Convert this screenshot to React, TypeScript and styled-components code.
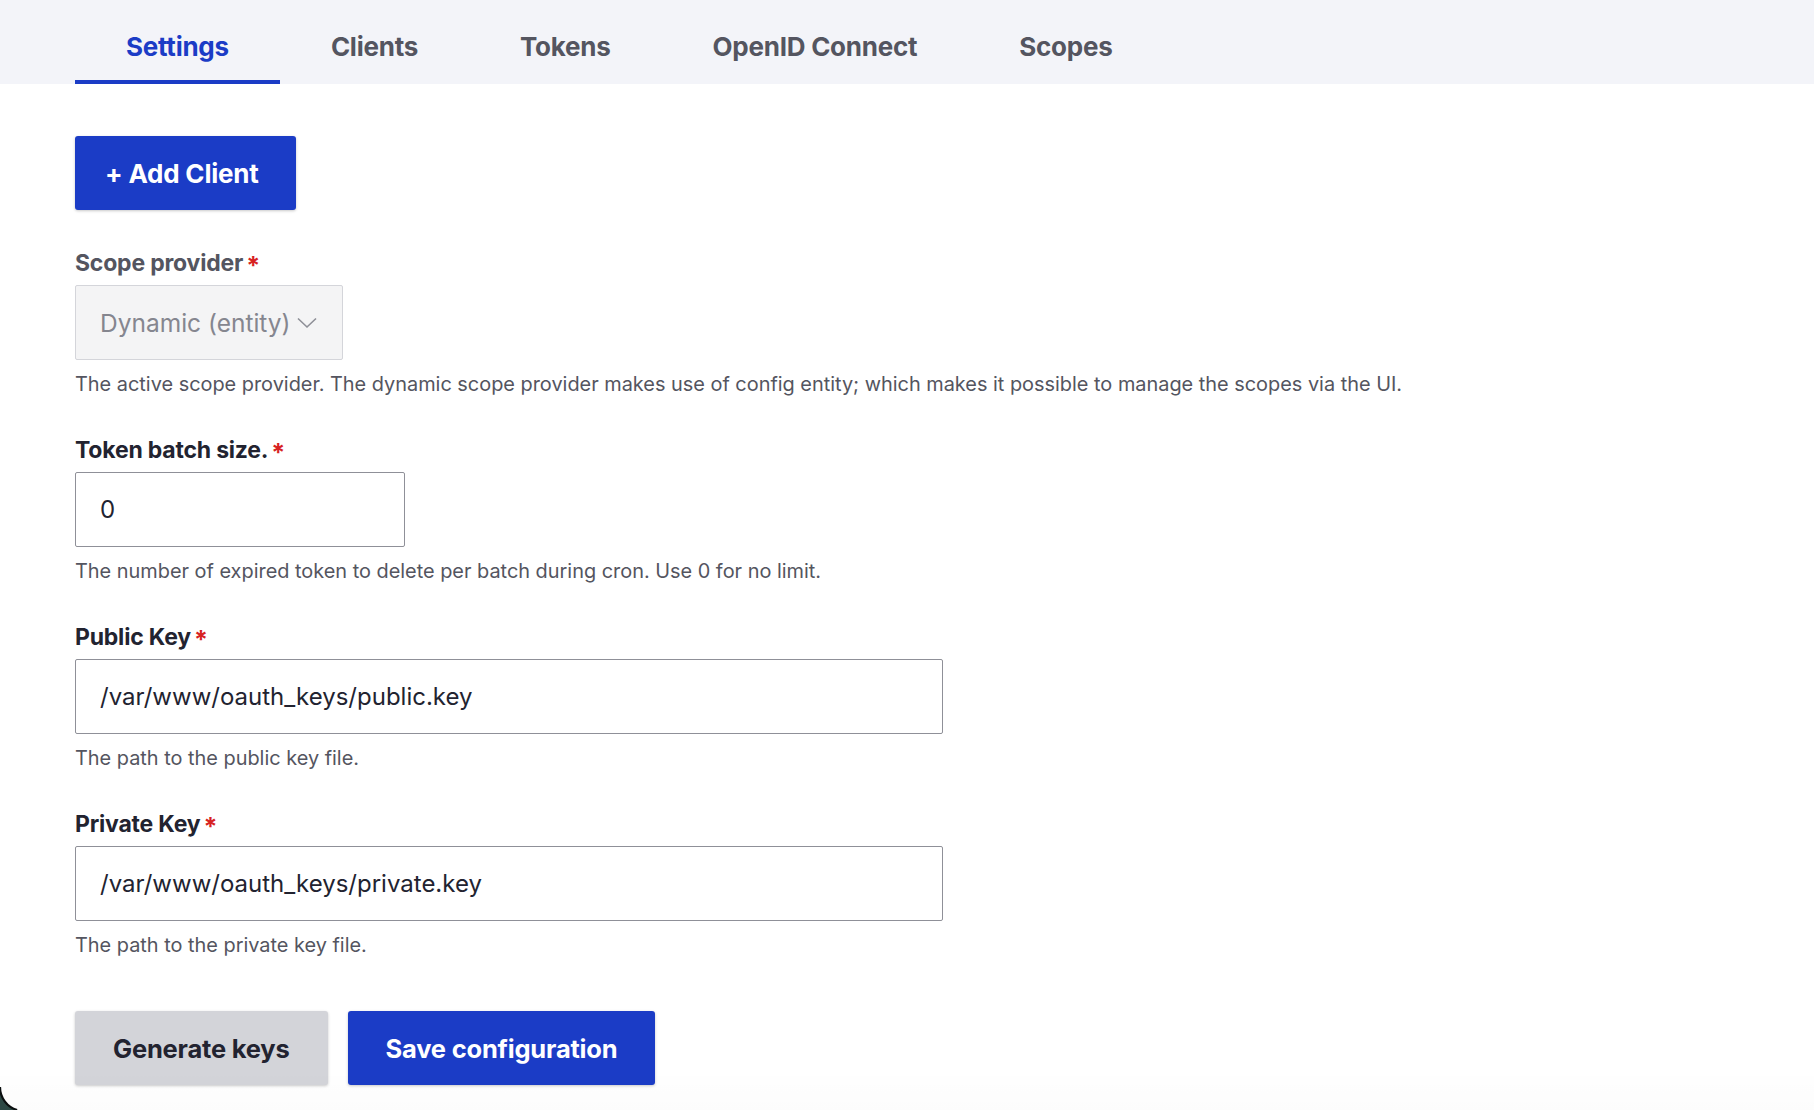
import React from 'react';
import styled, { createGlobalStyle } from 'styled-components';

const BLUE = '#1b3cc6';
const TEXT = '#222330';
const MUTED = '#545560';

const GlobalStyle = createGlobalStyle`
  html, body {
    margin: 0;
    padding: 0;
    background: #fff;
    font-family: Inter, "Noto Sans", "Liberation Sans", sans-serif;
    color: ${TEXT};
    overflow: hidden;
  }
  * { box-sizing: border-box; }
`;

const Page = styled.div`
  position: relative;
  min-height: 1110px;
  display: flex;
  flex-direction: column;
`;

const TabBar = styled.nav`
  display: flex;
  height: 84px;
  padding: 0 75px;
  background: #f3f4f9;
`;

const Tab = styled.a<{ $active?: boolean }>`
  display: flex;
  align-items: center;
  padding: 12px 51px 0;
  font-size: 26px;
  font-weight: 700;
  letter-spacing: -0.25px;
  text-decoration: none;
  color: ${(p) => (p.$active ? BLUE : MUTED)};
  border-bottom: 4px solid ${(p) => (p.$active ? BLUE : 'transparent')};
`;

const Content = styled.main`
  flex: 1;
  display: flex;
  flex-direction: column;
  align-items: flex-start;
  padding: 52px 75px 0;
`;

const Button = styled.button<{ $variant?: 'primary' | 'secondary' }>`
  height: 74px;
  padding: 0 38px;
  border: 0;
  border-radius: 3px;
  font-family: inherit;
  font-size: 25.5px;
  font-weight: 700;
  letter-spacing: -0.2px;
  color: ${(p) => (p.$variant === 'secondary' ? TEXT : '#fff')};
  background: ${(p) => (p.$variant === 'secondary' ? '#d3d4d9' : BLUE)};
  box-shadow: 0 1px 3px rgba(0, 0, 0, 0.22);
  cursor: pointer;
`;

const AddButton = styled(Button)`
  padding: 0 37px 0 30px;
  font-size: 26px;
`;

const Field = styled.div`
  display: flex;
  flex-direction: column;
  align-items: flex-start;
  margin-top: 39px;
`;

const Label = styled.label<{ $disabled?: boolean }>`
  display: flex;
  align-items: flex-start;
  font-size: 23px;
  line-height: 28px;
  font-weight: 700;
  letter-spacing: -0.2px;
  color: ${(p) => (p.$disabled ? MUTED : TEXT)};
  margin-bottom: 8px;
`;

const Required = styled.span`
  color: #d72222;
  font-size: 25px;
  line-height: 28px;
  margin-left: 3px;
  transform: translateY(3px);
`;

const SelectBox = styled.div`
  display: flex;
  align-items: center;
  gap: 6px;
  height: 75px;
  padding: 0 25px 0 24px;
  background: #f4f4f5;
  border: 1px solid #d4d5da;
  border-radius: 2px;
  font-size: 24.5px;
  color: #85868f;
`;

const TextInput = styled.input<{ $width: number }>`
  width: ${(p) => p.$width}px;
  height: 75px;
  padding: 0 24px;
  border: 1px solid #8f9098;
  border-radius: 2px;
  font-family: inherit;
  font-size: 24px;
  color: ${TEXT};
  background: #fff;
  outline: none;
`;

const Description = styled.div`
  margin-top: 11px;
  font-size: 19.9px;
  line-height: 26px;
  color: ${MUTED};
`;

const Actions = styled.div`
  display: flex;
  gap: 20px;
  margin-top: 53px;
`;

const BottomShade = styled.div`
  position: absolute;
  left: 0;
  right: 0;
  bottom: 0;
  height: 34px;
  background: linear-gradient(rgba(0, 0, 0, 0.004), rgba(0, 0, 0, 0.012));
  pointer-events: none;
`;

const Corner = styled.svg`
  position: absolute;
  left: 0;
  bottom: 0;
  width: 24px;
  height: 24px;
`;

const Chevron = () => (
  <svg width="20" height="12" viewBox="0 0 20 12" fill="none">
    <path d="M1 1.5 L10 10 L19 1.5" stroke="#8e8f97" strokeWidth="1.6" />
  </svg>
);

export default function App() {
  return (
    <Page>
      <GlobalStyle />
      <TabBar>
        <Tab $active>Settings</Tab>
        <Tab>Clients</Tab>
        <Tab>Tokens</Tab>
        <Tab>OpenID Connect</Tab>
        <Tab>Scopes</Tab>
      </TabBar>
      <Content>
        <AddButton $variant="primary">+ Add Client</AddButton>

        <Field>
          <Label $disabled>
            Scope provider<Required>*</Required>
          </Label>
          <SelectBox>
            Dynamic (entity)
            <Chevron />
          </SelectBox>
          <Description>
            The active scope provider. The dynamic scope provider makes use of config entity; which makes it possible to manage the scopes via the UI.
          </Description>
        </Field>

        <Field>
          <Label>
            Token batch size.<Required>*</Required>
          </Label>
          <TextInput $width={330} defaultValue="0" />
          <Description>The number of expired token to delete per batch during cron. Use 0 for no limit.</Description>
        </Field>

        <Field>
          <Label>
            Public Key<Required>*</Required>
          </Label>
          <TextInput $width={868} defaultValue="/var/www/oauth_keys/public.key" />
          <Description>The path to the public key file.</Description>
        </Field>

        <Field>
          <Label>
            Private Key<Required>*</Required>
          </Label>
          <TextInput $width={868} defaultValue="/var/www/oauth_keys/private.key" />
          <Description>The path to the private key file.</Description>
        </Field>

        <Actions>
          <Button $variant="secondary">Generate keys</Button>
          <Button $variant="primary">Save configuration</Button>
        </Actions>
      </Content>
      <BottomShade />
      <Corner viewBox="0 0 24 24">
        <path d="M0 1 A24 24 0 0 0 17.1 24 L0 24 Z" fill="#2c4844" />
        <path d="M0 1 A24 24 0 0 0 17.1 24" fill="none" stroke="#0b0f0f" strokeWidth="2.2" />
      </Corner>
    </Page>
  );
}
